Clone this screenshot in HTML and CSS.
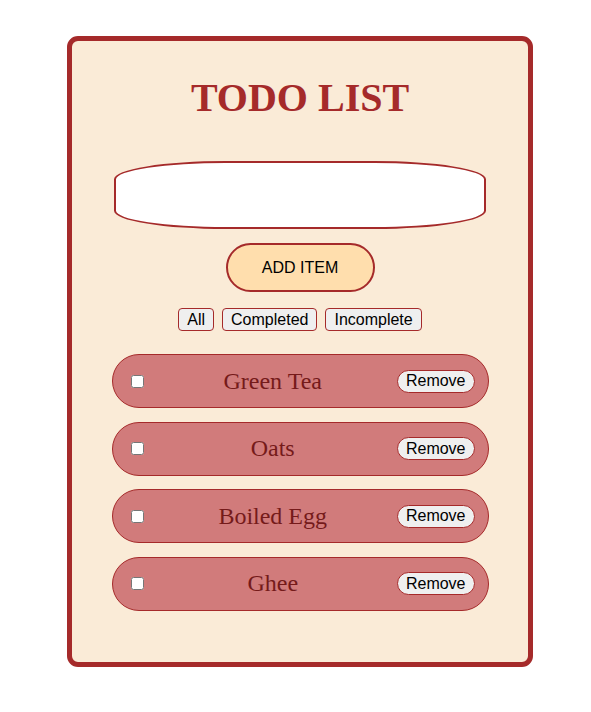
FILE: index.html
```html
<!DOCTYPE html>
<html lang="en">
<head>
<meta charset="utf-8">
<title>Todo List</title>
<link rel="stylesheet" href="styles.css">
</head>
<body>
<div class="card">
  <h1 class="title">TODO LIST</h1>
  <input class="new-item" type="text">
  <button class="add-btn">ADD ITEM</button>
  <div class="filters">
    <button class="filter-btn">All</button>
    <button class="filter-btn">Completed</button>
    <button class="filter-btn">Incomplete</button>
  </div>
  <ul class="list">
    <li class="item"><input class="check" type="checkbox"><span class="label">Green Tea</span><button class="remove-btn">Remove</button></li>
    <li class="item"><input class="check" type="checkbox"><span class="label">Oats</span><button class="remove-btn">Remove</button></li>
    <li class="item"><input class="check" type="checkbox"><span class="label">Boiled Egg</span><button class="remove-btn">Remove</button></li>
    <li class="item"><input class="check" type="checkbox"><span class="label">Ghee</span><button class="remove-btn">Remove</button></li>
  </ul>
</div>
</body>
</html>
```
FILE: styles.css
```css
html, body {
  margin: 0;
  padding: 0;
  background: #ffffff;
}

body {
  font-family: "Liberation Serif", "Times New Roman", serif;
}

.card {
  box-sizing: border-box;
  width: 466px;
  height: 631px;
  margin: 36px 0 0 67px;
  border: 5px solid #a52a2a;
  border-radius: 11px;
  background: #faebd7;
  display: flex;
  flex-direction: column;
  align-items: center;
}

.title {
  margin: 34px 0 0;
  font-family: "Liberation Serif", "Times New Roman", serif;
  font-size: 40px;
  font-weight: bold;
  line-height: 46px;
  color: #a52a2a;
}

.new-item {
  box-sizing: border-box;
  width: 372px;
  height: 68px;
  margin: 40px 0 0;
  border: 2px solid #a52a2a;
  border-radius: 30% / 27%;
  background: #ffffff;
  outline: none;
}

.add-btn {
  box-sizing: border-box;
  width: 149px;
  height: 49px;
  margin-top: 14px;
  padding: 0;
  border: 2px solid #a52a2a;
  border-radius: 25px;
  background: #ffdead;
  color: #000000;
  font-family: "Liberation Sans", Arial, sans-serif;
  font-size: 16px;
}

.filters {
  display: flex;
  gap: 8px;
  margin-top: 16px;
}

.filter-btn {
  box-sizing: border-box;
  height: 23px;
  padding: 0 8px;
  border: 1px solid #a52a2a;
  border-radius: 4px;
  background: #efefef;
  color: #000000;
  font-family: "Liberation Sans", Arial, sans-serif;
  font-size: 16px;
}

.list {
  list-style: none;
  margin: 23px 0 0;
  padding: 0;
  display: flex;
  flex-direction: column;
  gap: 13.5px;
}

.item {
  box-sizing: border-box;
  width: 377px;
  height: 54px;
  padding: 0 13px 0 14px;
  border: 1px solid #a52a2a;
  border-radius: 27px;
  background: #d17b7b;
  display: flex;
  align-items: center;
}

.check {
  width: 13px;
  height: 13px;
  margin: 0 0 0 4px;
}

.label {
  flex: 1;
  padding-left: 5px;
  text-align: center;
  font-family: "Liberation Serif", "Times New Roman", serif;
  font-size: 24px;
  color: #751a1a;
}

.remove-btn {
  box-sizing: border-box;
  height: 23px;
  padding: 0 8px;
  border: 1px solid #a52a2a;
  border-radius: 12px;
  background: #efefef;
  color: #000000;
  font-family: "Liberation Sans", Arial, sans-serif;
  font-size: 16px;
}
```
